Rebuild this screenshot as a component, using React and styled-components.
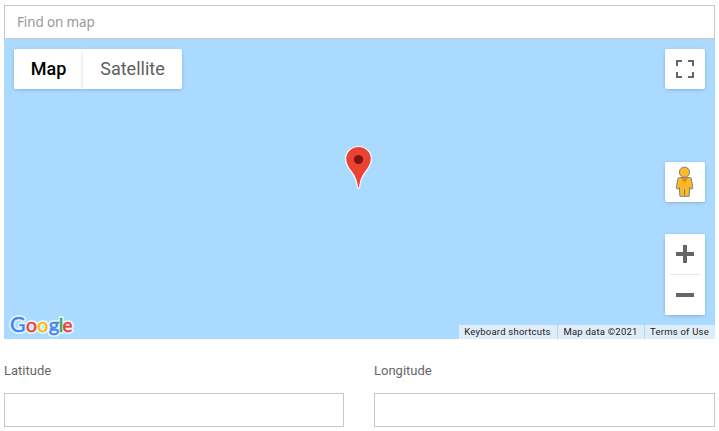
import React from "react";
import styled, { createGlobalStyle } from "styled-components";

const GlobalStyle = createGlobalStyle`
  * { box-sizing: border-box; }
  body { margin: 0; background: #fff; font-family: Roboto, sans-serif; overflow: hidden; }
`;

const Page = styled.main`
  width: 719px;
  height: 431px;
  padding: 5px 4px 0;
`;

const SearchInput = styled.input`
  display: block;
  width: 100%;
  height: 34px;
  padding: 0 12px;
  border: 1px solid #c7c7c7;
  border-radius: 0;
  outline: none;
  font: 13.5px "Noto Sans", sans-serif;
  letter-spacing: -0.14px;
  color: #555;
  &::placeholder { color: #999; opacity: 1; }
`;

const MapCanvas = styled.section`
  position: relative;
  height: 300px;
  background: #aadaff;
  display: flex;
  justify-content: space-between;
  align-items: flex-start;
  padding: 10px;
`;

const TypeSwitch = styled.div`
  display: flex;
  border-radius: 2px;
`;

const TypeButton = styled.button`
  width: ${(p) => p.$width}px;
  height: 40px;
  padding: 0 0 1px;
  border: 0;
  border-radius: ${(p) => (p.$active ? "2px 0 0 2px" : "0 2px 2px 0")};
  background: #fff;
  box-shadow: 0 1px 4px -1px rgba(0, 0, 0, 0.3);
  font: ${(p) => (p.$active ? 500 : 400)} 18px Roboto, sans-serif;
  color: ${(p) => (p.$active ? "#000" : "#5e5e5e")};
`;

const Controls = styled.div`
  display: flex;
  flex-direction: column;
`;

const ControlButton = styled.button`
  display: block;
  width: 40px;
  height: 40px;
  margin-bottom: ${(p) => p.$gap || 0}px;
  padding: 0;
  border: 0;
  border-radius: 2px;
  background: #fff;
  box-shadow: ${(p) => (p.$flat ? "none" : "0 1px 4px -1px rgba(0, 0, 0, 0.3)")};
  svg { display: block; }
`;

const ZoomGroup = styled.div`
  width: 40px;
  height: 81px;
  border-radius: 2px;
  background: #fff;
  box-shadow: 0 1px 4px -1px rgba(0, 0, 0, 0.3);
`;

const Divider = styled.div`
  height: 1px;
  margin: 0 5px;
  background: #e6e6e6;
`;

const Marker = styled.svg`
  position: absolute;
  left: 341px;
  top: 106px;
`;

const Logo = styled.svg`
  position: absolute;
  left: 4px;
  bottom: 0;
  font-family: Lato, sans-serif;
`;

const Attribution = styled.div`
  position: absolute;
  right: 0;
  bottom: 0;
  display: flex;
  gap: 1px;
`;

const Credit = styled.span`
  width: ${(p) => p.$width}px;
  height: 14px;
  line-height: 14px;
  padding-right: 1px;
  text-align: center;
  white-space: nowrap;
  font-size: 9.5px;
  letter-spacing: 0.22px;
  color: #222;
  background: rgba(245, 245, 245, 0.7);
`;

const Fields = styled.div`
  display: grid;
  grid-template-columns: 340px 341px;
  column-gap: 30px;
  padding-top: 23px;
`;

const Field = styled.label`
  display: flex;
  flex-direction: column;
  gap: 14px;
  font-size: 13px;
  line-height: 17px;
  color: #666;
`;

const FieldInput = styled.input`
  width: 100%;
  height: 34px;
  padding: 0 12px;
  border: 1px solid #c7c7c7;
  border-radius: 0;
  outline: none;
`;

const LOGO_LETTERS = [
  { char: "G", x: 2, width: 15.5, size: 21, fill: "#4285f4" },
  { char: "o", x: 18, width: 11, size: 18.5, fill: "#ea4335" },
  { char: "o", x: 29.300, width: 11, size: 18.5, fill: "#fbbc05" },
  { char: "g", x: 40.800, width: 10.5, size: 18.5, fill: "#4285f4" },
  { char: "l", x: 50.800, width: 4.5, size: 20, fill: "#34a853" },
  { char: "e", x: 54.400, width: 10, size: 18.5, fill: "#ea4335" },
];

function LogoLetters({ halo }) {
  return LOGO_LETTERS.map((l, i) => (
    <text
      key={i}
      x={l.x}
      y="20.5"
      fontSize={l.size}
      textLength={l.width}
      lengthAdjust="spacingAndGlyphs"
      fill={l.fill}
      stroke={halo ? "#e4f3ff" : l.fill}
    >
      {l.char}
    </text>
  ));
}

function GoogleLogo() {
  return (
    <Logo width="72" height="28" aria-label="Google">
      <g strokeWidth="4" strokeLinejoin="round" aria-hidden="true">
        <LogoLetters halo />
      </g>
      <g strokeWidth="0.5">
        <LogoLetters />
      </g>
    </Logo>
  );
}

function Pin() {
  return (
    <Marker width="27" height="44" viewBox="0 0 27 44">
      <path
        d="M13.500 1.500C6.200 1.500.6 7.100.6 14c0 4.200 1.900 7.500 4.500 11 3.400 4.700 6.500 8 7.200 16.500.1 1.500.5 2 1.200 2s1.100-.5 1.200-2C15.400 33 18.500 29.700 21.900 25c2.600-3.500 4.500-6.800 4.500-11C26.400 7.100 20.800 1.500 13.500 1.500Z"
        fill="#ea4335" stroke="#fff" strokeWidth="1.200"
      />
      <circle cx="13.500" cy="14.500" r="4.600" fill="#811411" />
    </Marker>
  );
}

function Pegman() {
  return (
    <svg width="40" height="40" viewBox="0 0 40 40">
      <path
        d="M14.500 15.500h10.200q1.300 0 1.600 1.500l1.500 8.500q.2 1.500-1.300 1.500t-1.800-1.500l-.5 8.800h-9.300l-.5-8.800q-.3 1.500-1.800 1.500t-1.300-1.500l1.600-8.500q.3-1.500 1.600-1.500Z"
        fill="#fbb829" stroke="#7c8085"
      />
      <path d="M19.500 27v6.800" stroke="#7c8085" />
      <path d="M15.500 15.500h8l-4 5.500Z" fill="#e58b20" />
      <circle cx="19.500" cy="10.200" r="5.100" fill="#fbb829" stroke="#7c8085" />
    </svg>
  );
}

export default function App() {
  return (
    <>
      <GlobalStyle />
      <Page>
        <SearchInput placeholder="Find on map" />
        <MapCanvas>
          <TypeSwitch>
            <TypeButton $active $width={69}>Map</TypeButton>
            <TypeButton $width={99}>Satellite</TypeButton>
          </TypeSwitch>
          <Controls>
            <ControlButton $gap={73} aria-label="Fullscreen">
              <svg width="40" height="40" fill="none" stroke="#666" strokeWidth="2">
                <path d="M12 17v-5h5M23 12h5v5M28 23v5h-5M17 28h-5v-5" />
              </svg>
            </ControlButton>
            <ControlButton $gap={32} aria-label="Street View">
              <Pegman />
            </ControlButton>
            <ZoomGroup>
              <ControlButton $flat aria-label="Zoom in">
                <svg width="40" height="40" fill="#666">
                  <path d="M18 11h4v7h7v4h-7v7h-4v-7h-7v-4h7Z" />
                </svg>
              </ControlButton>
              <Divider />
              <ControlButton $flat aria-label="Zoom out">
                <svg width="40" height="40" fill="#666">
                  <path d="M11 18h18v4H11Z" />
                </svg>
              </ControlButton>
            </ZoomGroup>
          </Controls>
          <Pin />
          <GoogleLogo />
          <Attribution>
            <Credit $width={98}>Keyboard shortcuts</Credit>
            <Credit $width={86}>Map data ©2021</Credit>
            <Credit $width={70}>Terms of Use</Credit>
          </Attribution>
        </MapCanvas>
        <Fields>
          <Field>Latitude<FieldInput /></Field>
          <Field>Longitude<FieldInput /></Field>
        </Fields>
      </Page>
    </>
  );
}
